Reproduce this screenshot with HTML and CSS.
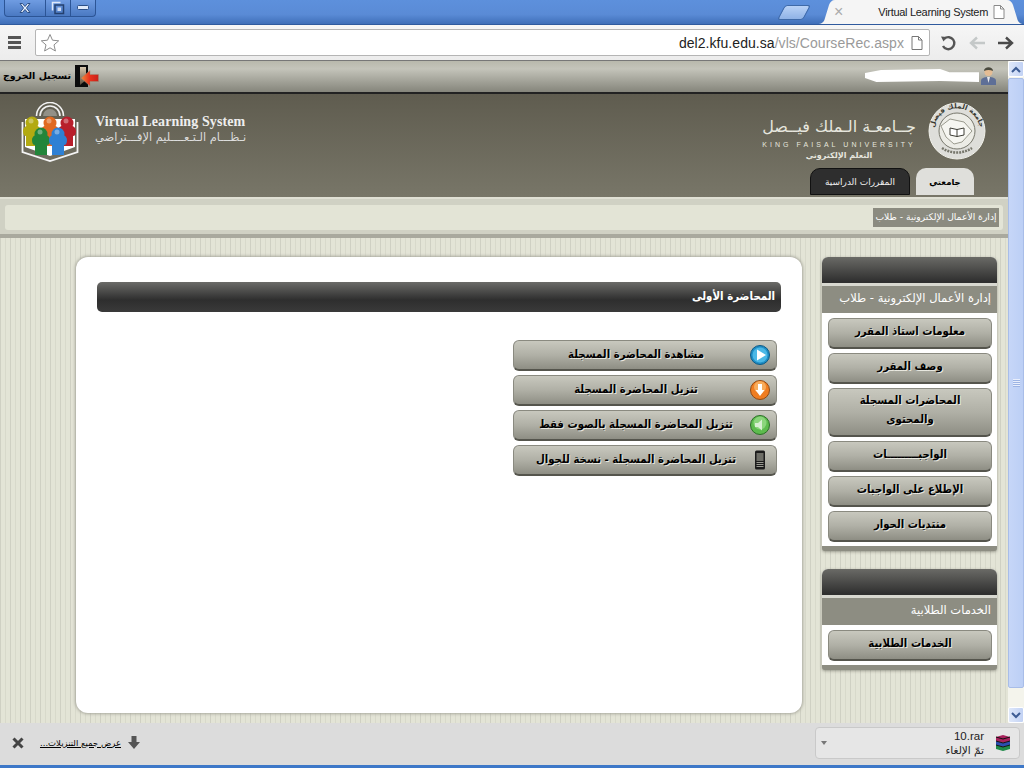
FILE: index.html
```html
<!DOCTYPE html>
<html lang="ar">
<head>
    <meta charset="UTF-8">
    <title>Virtual Learning System</title>
    <link rel="stylesheet" href="styles.css">
</head>
<body>
    <div class="titlebar">
        <div class="win-btns">
            <span class="win-btn win-close"><svg width="14" height="12" viewBox="0 0 14 12"><path d="M2 1.500h2.500L7 4.500l2.500-3H12L8.500 6l3.500 4.500H9.500L7 7.500l-2.500 3H2L5.500 6z" fill="#e6eefb" stroke="#2c4f86" stroke-width="1"/></svg></span>
            <span class="win-btn win-restore"><svg width="14" height="14" viewBox="0 0 14 14"><path d="M1.500 9.500v-8h8" fill="none" stroke="#dfe9fa" stroke-width="1.500"/><rect x="4" y="4" width="8.500" height="8.500" fill="none" stroke="#24406e" stroke-width="1.500"/><rect x="6.500" y="6.500" width="3.500" height="3.500" fill="#cfdcf3"/></svg></span>
            <span class="win-btn win-min"><svg width="12" height="6" viewBox="0 0 12 6"><rect x="0.500" y="0.500" width="11" height="4" rx="1" fill="#dfe9fa" stroke="#2c4f86"/></svg></span>
        </div>
        <div class="tabstrip">
            <span class="newtab"></span>
            <div class="tab">
                <span class="tab-x">×</span>
                <span class="tab-title">Virtual Learning System</span>
                <svg class="page-ico" width="12" height="14" viewBox="0 0 12 14"><path d="M1 .5h6.500L11 4v9.500H1zM7.500 .5V4H11" fill="#fff" stroke="#8a8a8a"/></svg>
            </div>
        </div>
    </div>

    <div class="toolbar">
        <span class="menu-ico"><i></i><i></i><i></i></span>
        <div class="omnibox">
            <svg width="20" height="20" viewBox="0 0 20 20"><path d="M10 1.500l2.500 5.700 6.200.6-4.700 4.100 1.400 6.100-5.400-3.200-5.400 3.200 1.400-6.100L1.300 7.800l6.200-.6z" fill="#fff" stroke="#8d8d8d"/></svg>
            <div class="url"><span class="host">del2.kfu.edu.sa</span>/vls/CourseRec.aspx</div>
            <svg width="12" height="14" viewBox="0 0 12 14"><path d="M1 .5h6.500L11 4v9.500H1zM7.500 .5V4H11" fill="#fff" stroke="#777"/></svg>
        </div>
        <div class="nav-btns">
            <svg width="16" height="16" viewBox="0 0 16 16"><path d="M4.500 3.500A6 6 0 1 1 3 11" fill="none" stroke="#555" stroke-width="2.400"/><path d="M1 1.500l6 .5-3.500 4.500z" fill="#555"/></svg>
            <svg width="18" height="14" viewBox="0 0 18 14"><path d="M17 7H4M9 1.500L3 7l6 5.500" fill="none" stroke="#c4c8c8" stroke-width="2.400"/></svg>
            <svg width="18" height="14" viewBox="0 0 18 14"><path d="M1 7h13M9 1.500L15 7l-6 5.500" fill="none" stroke="#4a4a4a" stroke-width="2.400"/></svg>
        </div>
    </div>

    <div class="viewport">
        <div class="page">
            <div class="userbar">
                <div class="logout">
                    <span>تسجيل الخروج</span>
                    <svg width="26" height="24" viewBox="0 0 26 24">
                        <defs>
                            <linearGradient id="exit-arrow" x1="0" x2="1"><stop offset="0" stop-color="#f08a3c"/><stop offset="0.5" stop-color="#e8321c"/><stop offset="1" stop-color="#c9201a"/></linearGradient>
                            <linearGradient id="exit-door" x1="0" x2="0" y1="0" y2="1"><stop offset="0" stop-color="#d6c7ad"/><stop offset="1" stop-color="#5a4c3c"/></linearGradient>
                        </defs>
                        <rect x="1" y="1" width="13" height="22" fill="#0c0c0c"/>
                        <path d="M6 3h6v13l-6 5z" fill="url(#exit-door)"/>
                        <path d="M7 14l9-7.500v4h8.500v7H16V22z" fill="url(#exit-arrow)" stroke="#9a8a76" stroke-width="0.500"/>
                    </svg>
                </div>
                <div class="user">
                    <span class="user-blot"></span>
                    <svg width="17" height="19" viewBox="0 0 17 19"><path d="M1 19v-4c0-3 3-4 7.500-4s7.500 1 7.500 4v4z" fill="#5e6f97"/><path d="M7 11h3l-1.500 6z" fill="#e8e8e8"/><circle cx="8.500" cy="6" r="4" fill="#e5bd94"/><path d="M4 5c0-5 9-5 9 0-3-1.500-6-1.500-9 0z" fill="#4a4a3e"/></svg>
                </div>
            </div>

            <div class="banner">
                <div class="brand">
                    <svg class="brand-logo" width="60" height="60" viewBox="0 0 60 60">
                        <defs>
                            <path id="person-body" d="M-1 12c0-4 4-6 9-6s9 2 9 6c0 3-1 5-3 5v10H2V17c-2 0-3-2-3-5z"/>
                        </defs>
                        <g fill="none" stroke="#f2f2f2" stroke-width="1.600"><path d="M19 14a10 10 0 0 1 20 0"/><path d="M15.500 14a13.500 13.500 0 0 1 27 0"/></g>
                        <path d="M22 14a7 7 0 0 1 14 0z" fill="#fff" opacity="0.300"/>
                        <path d="M4 17h50v28l-25 9-25-9z" fill="#fff"/>
                        <path d="M1.500 20v30l27.500 9 27.500-9V20" fill="none" stroke="#f4f4f4" stroke-width="1.800"/>
                        <g fill="#b3aa12"><use href="#person-body" x="3" y="17"/><circle cx="11" cy="21" r="6.500"/></g>
                        <g fill="#e06a22"><use href="#person-body" x="21" y="17"/><circle cx="29" cy="21" r="6.500"/></g>
                        <g fill="#b81f2c"><use href="#person-body" x="38" y="17"/><circle cx="46" cy="21" r="6.500"/></g>
                        <g fill="#23853a"><use href="#person-body" x="12" y="26"/><circle cx="20" cy="32" r="6.500"/></g>
                        <g fill="#2f80d4"><use href="#person-body" x="29" y="26"/><circle cx="37" cy="32" r="6.500"/></g>
                        <g fill="#fff" opacity="0.350"><circle cx="10" cy="19" r="2.500"/><circle cx="28" cy="19" r="2.500"/><circle cx="45" cy="19" r="2.500"/><circle cx="19" cy="30" r="2.500"/><circle cx="36" cy="30" r="2.500"/></g>
                    </svg>
                    <div class="brand-text">
                        <div class="brand-en">Virtual Learning System</div>
                        <div class="brand-ar">نـظـــام الـتـعــــليم الإفـــتراضي</div>
                    </div>
                </div>
                <div class="uni">
                    <div class="uni-row">
                        <div class="uni-text">
                            <div class="uni-ar">جــامعـة الـملك فيــصل</div>
                            <div class="uni-en">KING FAISAL UNIVERSITY</div>
                            <div class="uni-sub">التعلم الإلكتروني</div>
                        </div>
                        <svg class="seal" width="58" height="58" viewBox="0 0 58 58">
                            <defs><path id="seal-ring" d="M7 36A23 23 0 1 1 51 36"/></defs>
                            <circle cx="29" cy="29" r="28" fill="#dededa" stroke="#f1f1ea" stroke-width="1"/>
                            <text class="seal-text"><textPath href="#seal-ring" startOffset="50%" text-anchor="middle">جامعة الملك فيصل</textPath></text>
                            <circle cx="29" cy="29" r="18" fill="#ecece6" stroke="#77776c"/>
                            <path d="M13 24l9-7 14 3 8 9-10 11-8 2-8-7z" fill="#f6f6f1" stroke="#9a9a8e"/>
                            <path d="M22 26l7 1.500 7-1.500v7l-7 1.500-7-1.500zM29 27.500v7" fill="#fff" stroke="#3e3e36"/>
                            <path d="M14 46c9 6 21 6 30 0" fill="none" stroke="#77776c" stroke-width="2.500" stroke-dasharray="2 1"/>
                        </svg>
                    </div>
                    <div class="tabs">
                        <span class="tab-dark">المقررات الدراسية</span>
                        <span class="tab-light">جامعتي</span>
                    </div>
                </div>
            </div>

            <div class="crumb-band">
                <div class="crumb-bar"><span class="crumb-label">إدارة الأعمال الإلكترونية - طلاب</span></div>
            </div>

            <div class="content">
                <div class="sidebar">
                    <div class="box">
                        <div class="box-head"></div>
                        <div class="box-title">إدارة الأعمال الإلكترونية - طلاب</div>
                        <div class="box-body">
                            <a class="side-btn">معلومات استاذ المقرر</a>
                            <a class="side-btn">وصف المقرر</a>
                            <a class="side-btn side-btn-tall">المحاضرات المسجلة<br>والمحتوى</a>
                            <a class="side-btn">الواجبـــــــــات</a>
                            <a class="side-btn">الإطلاع على الواجبات</a>
                            <a class="side-btn">منتديات الحوار</a>
                        </div>
                    </div>
                    <div class="box">
                        <div class="box-head"></div>
                        <div class="box-title">الخدمات الطلابية</div>
                        <div class="box-body">
                            <a class="side-btn">الخدمات الطلابية</a>
                        </div>
                    </div>
                </div>

                <div class="main">
                    <div class="main-title">المحاضرة الأولى</div>
                    <div class="rec-list">
                        <a class="rec-btn">
                            <svg width="20" height="20" viewBox="0 0 20 20"><circle cx="10" cy="10" r="9.500" fill="#1f8fc6" stroke="#0d5a86"/><circle cx="10" cy="10" r="7.500" fill="#4bb8e6"/><path d="M7 4.500l9 5.500-9 5.500z" fill="#fff"/></svg>
                            <span>مشاهدة المحاضرة المسجلة</span>
                        </a>
                        <a class="rec-btn">
                            <svg width="20" height="20" viewBox="0 0 20 20"><circle cx="10" cy="10" r="9.500" fill="#ef7d22" stroke="#8f4a14"/><circle cx="10" cy="7" r="6" fill="#f7ac5c"/><path d="M8 4h4v6h2.500L10 16l-4.500-6H8z" fill="#fff"/></svg>
                            <span>تنزيل المحاضرة المسجلة</span>
                        </a>
                        <a class="rec-btn">
                            <svg width="20" height="20" viewBox="0 0 20 20"><circle cx="10" cy="10" r="9.500" fill="#5dbb4e" stroke="#2c6f28"/><circle cx="10" cy="8" r="6.500" fill="#8bd57c"/><path d="M5 8h3l4-3.500v11L8 12H5z" fill="#d8efd2"/></svg>
                            <span>تنزيل المحاضرة المسجلة بالصوت فقط</span>
                        </a>
                        <a class="rec-btn">
                            <svg width="20" height="20" viewBox="0 0 20 20"><rect x="5" y="0.500" width="10" height="19" rx="1.500" fill="#1b1b1b"/><rect x="6.500" y="3" width="7" height="8" fill="#6d6d66"/><path d="M6.500 12.500h7M6.500 14.500h7M6.500 16.500h7" stroke="#9a9a92"/></svg>
                            <span>تنزيل المحاضرة المسجلة - نسخة للجوال</span>
                        </a>
                    </div>
                </div>
            </div>
        </div>
        <div class="scrollbar">
            <span class="sb-btn"><svg width="10" height="7" viewBox="0 0 10 7"><path d="M1 6l4-4 4 4" fill="none" stroke="#3d5c94" stroke-width="2"/></svg></span>
            <div class="sb-thumb"><span class="sb-grip"></span></div>
            <span class="sb-btn"><svg width="10" height="7" viewBox="0 0 10 7"><path d="M1 1l4 4 4-4" fill="none" stroke="#3d5c94" stroke-width="2"/></svg></span>
        </div>
    </div>

    <div class="downloads">
        <svg class="dl-close" width="12" height="12" viewBox="0 0 12 12"><path d="M1.500 1.500l9 9M10.500 1.500l-9 9" stroke="#444" stroke-width="3"/></svg>
        <a class="dl-all">عرض جميع التنزيلات...</a>
        <svg width="12" height="13" viewBox="0 0 12 13"><path d="M3.500 0h5v6H12l-6 7-6-7h3.500z" fill="#555"/></svg>
        <div class="dl-item">
            <span class="dl-caret"></span>
            <div class="dl-text">
                <div class="dl-name">10.rar</div>
                <div class="dl-state">تمّ الإلغاء</div>
            </div>
            <svg width="16" height="18" viewBox="0 0 16 18"><path d="M1 3l7-2 7 2v4L8 9 1 7z" fill="#a8215c"/><path d="M1 7l7 2 7-2v4l-7 2-7-2z" fill="#2a4fb0"/><path d="M1 11l7 2 7-2v4l-7 2-7-2z" fill="#1f8a48"/><path d="M1 3l7 2 7-2M1 7l7 2 7-2M1 11l7 2 7-2" fill="none" stroke="#111"/></svg>
        </div>
    </div>
</body>
</html>
```

FILE: styles.css
```css
* { box-sizing: border-box; }
html, body {
    margin: 0;
    height: 768px;
    overflow: hidden;
}
body {
    width: 1024px;
    display: flex;
    flex-direction: column;
    font-family: "DejaVu Sans", sans-serif;
    background: #4a7fd0;
}

/* browser chrome */
.titlebar {
    height: 25px;
    flex: none;
    display: flex;
    justify-content: space-between;
    background: linear-gradient(#5d90dc, #5a8bd6 60%, #3f6fb8);
    border-bottom: 1px solid #2f5a9e;
}
.win-btns { display: flex; margin-left: 4px; height: 17px; }
.win-btn {
    display: flex;
    align-items: center;
    justify-content: center;
    height: 17px;
    background: linear-gradient(#6f9ce2, #4a79c2);
    border: 1px solid #2c5596;
    border-top: none;
    border-left: none;
}
.win-close { width: 42px; border-left: 1px solid #2c5596; border-radius: 0 0 0 4px; }
.win-restore { width: 25px; }
.win-min { width: 25px; border-radius: 0 0 4px 0; }
.tabstrip { display: flex; align-items: flex-end; }
.newtab {
    width: 26px;
    height: 15px;
    margin: 0 10px 4px 0;
    background: linear-gradient(#b9d2f6, #8fb2e6);
    border: 1px solid #3f6aa8;
    border-radius: 3px;
    transform: skewX(-28deg);
}
.tab {
    width: 207px;
    height: 24px;
    display: flex;
    align-items: center;
    padding: 0 19px 0 17px;
    background: #f5f5f5;
    clip-path: path('M0 24C5 24 7 22 8 18L12 5C13 2 15 0 18 0H190C193 0 195 2 196 5L200 18C201 22 203 24 207 24Z');
}
.tab-x { color: #aaa; font: 16px "Liberation Sans", sans-serif; margin-right: 35px; }
.tab-title { font: 11px "Liberation Sans", sans-serif; letter-spacing: -0.3px; color: #222; flex: 1; white-space: nowrap; }
.page-ico { flex: none; }

.toolbar {
    height: 36px;
    flex: none;
    display: flex;
    align-items: center;
    padding: 0 9px 0 8px;
    background: linear-gradient(#f6f6f6, #ececec);
    border-bottom: 1px solid #777;
}
.menu-ico { width: 13px; margin-right: 14px; display: flex; flex-direction: column; gap: 2px; }
.menu-ico i { height: 3px; background: #555; display: block; }
.omnibox {
    width: 895px;
    height: 27px;
    display: flex;
    align-items: center;
    padding: 0 6px 0 4px;
    background: #fff;
    border: 1px solid #b5b5b5;
    border-radius: 2px;
}
.url {
    flex: 1;
    text-align: right;
    font: 14px "Liberation Sans", sans-serif;
    letter-spacing: 0.05px;
    color: #9a9a9a;
    padding-right: 7px;
}
.host { color: #222; }
.nav-btns { flex: 1; display: flex; align-items: center; justify-content: space-between; padding-left: 10px; }

/* page */
.viewport { height: 662px; flex: none; display: flex; }
.page {
    width: 1008px;
    flex: none;
    display: flex;
    flex-direction: column;
    background: repeating-linear-gradient(90deg, #cfd0c3 0, #cfd0c3 1px, #e3e4d6 1px, #e3e4d6 5px, #d8d9cb 5px, #d8d9cb 6px, #e3e4d6 6px, #e3e4d6 10px);
}
.userbar {
    height: 33px;
    flex: none;
    display: flex;
    justify-content: space-between;
    align-items: center;
    padding: 0 11px 2px 3px;
    background: linear-gradient(#b8b8ac, #c4c4ba 25%, #9a9a90 75%, #85857b);
    border-bottom: 2px solid #222;
}
.logout { display: flex; align-items: center; gap: 3px; font-size: 9.500px; font-weight: bold; color: #000; }
.user { display: flex; align-items: center; gap: 1px; }
.user-blot {
    width: 114px;
    height: 13px;
    background: #fff;
    clip-path: polygon(0 30%, 14% 8%, 66% 0, 74% 25%, 100% 25%, 100% 100%, 66% 92%, 10% 100%, 0 70%);
}

.banner {
    height: 103px;
    flex: none;
    display: flex;
    justify-content: space-between;
    padding: 8px 22px 0 21px;
    background: linear-gradient(#5f5c4f, #787668);
}
.brand { display: flex; gap: 14px; }
.brand-logo { flex: none; }
.brand-text { padding-top: 12px; color: #eee; }
.brand-en { font: bold 14px "Liberation Serif", serif; letter-spacing: 0.1px; line-height: 16px; }
.brand-ar { font-size: 11.400px; line-height: 15px; direction: rtl; white-space: nowrap; color: #ddd; }
.uni { display: flex; flex-direction: column; align-items: flex-end; }
.uni-row { display: flex; gap: 11px; height: 60px; }
.uni-text { width: 156px; text-align: center; color: #e6e6de; padding-top: 13px; }
.uni-ar { font-size: 16px; line-height: 23px; direction: rtl; white-space: nowrap; }
.uni-en { font: 7px "Liberation Sans", sans-serif; letter-spacing: 3.050px; white-space: nowrap; line-height: 10px; margin-top: 2px; }
.uni-sub { font-size: 8px; font-weight: bold; line-height: 12px; direction: rtl; }
.seal-text { font-size: 7px; font-weight: bold; fill: #3a3a32; letter-spacing: 1.500px; }
.tabs { display: flex; gap: 6px; margin: 6px 12px 0 0; }
.tab-dark, .tab-light {
    height: 27px;
    display: flex;
    align-items: center;
    justify-content: center;
    border-radius: 10px 10px 0 0;
    font-size: 9px;
}
.tab-dark { width: 100px; background: #2e2e2e; color: #eee; border: 1px solid #111; }
.tab-light { width: 58px; background: #dfdfdb; color: #000; font-weight: bold; font-size: 8.500px; }

.crumb-band {
    height: 41px;
    flex: none;
    padding: 6px 5px 0;
    background: #d0d1c4;
    border-top: 2px solid #e0e0d4;
    border-bottom: 4px solid #a9a99e;
}
.crumb-bar {
    height: 25px;
    display: flex;
    justify-content: flex-end;
    align-items: center;
    padding-right: 4px;
    background: #e3e4d6;
    border-radius: 3px;
}
.crumb-label {
    width: 126px;
    height: 19px;
    background: #8b8b80;
    color: #fff;
    font-size: 9.200px;
    line-height: 18px;
    text-align: center;
    white-space: nowrap;
    direction: rtl;
}

.content {
    flex: 1;
    display: flex;
    direction: rtl;
    padding: 19px 11px 0 0;
    gap: 20px;
    align-items: flex-start;
}
.sidebar { width: 175px; flex: none; display: flex; flex-direction: column; gap: 18px; }
.box {
    background: #fff;
    border-radius: 6px 6px 3px 3px;
    border-bottom: 5px solid #8d8d82;
    box-shadow: 0 1px 3px rgba(80,80,70,0.5);
}
.box-head {
    height: 29px;
    background: linear-gradient(#6a6a66, #2f2f2f 85%, #2f2f2f 88%, #d8d8d0 88%);
    border-radius: 6px 6px 0 0;
}
.box-title {
    height: 27px;
    padding: 0 6px;
    background: #8d8d82;
    color: #fff;
    font-size: 11.500px;
    line-height: 25px;
    white-space: nowrap;
    overflow: hidden;
}
.box-body { display: flex; flex-direction: column; gap: 4px; padding: 5px 5px 4px 6px; }
.side-btn, .rec-btn {
    display: flex;
    border: 1px solid #8a8a80;
    border-bottom: 2px solid #55554d;
    border-radius: 6px;
    background: linear-gradient(#c8c8be, #b0b0a6 50%, #8e8e84);
    color: #000;
    font-family: "DejaVu Sans Condensed", "DejaVu Sans", sans-serif;
    font-size: 11.300px;
    font-weight: bold;
    text-shadow: 1px 1px 0 #e8e8e0;
    white-space: nowrap;
}
.side-btn {
    height: 31px;
    align-items: center;
    justify-content: center;
    text-align: center;
    line-height: 19px;
    padding-bottom: 4px;
}
.side-btn-tall { height: 49px; }

.main {
    width: 726px;
    height: 456px;
    flex: none;
    padding: 25px 21px 0;
    background: #fff;
    border-radius: 12px;
    box-shadow: 0 0 3px 1px #a9a99e;
}
.main-title {
    height: 30px;
    padding: 0 6px;
    background: linear-gradient(#6b6b68, #2e2e2e 60%, #3a3a3a);
    border-radius: 5px;
    color: #fff;
    font-family: "DejaVu Sans Condensed", "DejaVu Sans", sans-serif;
    font-size: 11.400px;
    font-weight: bold;
    line-height: 28px;
}
.rec-list { width: 264px; margin: 28px 4px 0 0; display: flex; flex-direction: column; gap: 4px; }
.rec-btn {
    height: 31px;
    align-items: center;
    padding: 0 6px 0 8px;
}
.rec-btn svg { flex: none; }
.rec-btn span { flex: 1; text-align: center; padding-bottom: 2px; }

.scrollbar {
    width: 16px;
    flex: none;
    display: flex;
    flex-direction: column;
    background: #f4f4ec;
    direction: ltr;
}
.sb-btn {
    height: 16px;
    flex: none;
    display: flex;
    align-items: center;
    justify-content: center;
    background: linear-gradient(90deg, #dfe8fa, #c2d2f4);
    border: 1px solid #fff;
    border-radius: 2px;
}
.sb-thumb {
    height: 610px;
    flex: none;
    margin: 1px 0 auto;
    display: flex;
    align-items: center;
    justify-content: center;
    background: linear-gradient(90deg, #c6d6f8, #bccff5);
    border: 1px solid #a8bde8;
    border-radius: 2px;
}
.sb-grip {
    width: 7px;
    height: 8px;
    background: repeating-linear-gradient(#e8eefc 0, #e8eefc 1px, #9db4e4 1px, #9db4e4 2px);
}

/* downloads shelf */
.downloads {
    flex: 1;
    display: flex;
    align-items: center;
    padding: 0 4px 3px 12px;
    background: #dcdcdc;
    border-bottom: 3px solid #3d78c8;
}
.dl-close { flex: none; margin-right: 17px; }
.dl-all {
    width: 80px;
    font-size: 8.500px;
    color: #000;
    text-decoration: underline;
    direction: rtl;
    white-space: nowrap;
    margin-right: 7px;
}
.dl-item {
    width: 205px;
    height: 32px;
    margin-left: auto;
    display: flex;
    align-items: center;
    padding: 0 8px 0 4px;
    background: #e6e6e6;
    border: 1px solid #c9c9c9;
    border-radius: 4px;
}
.dl-caret {
    width: 0;
    height: 0;
    margin: 0 8px 0 1px;
    border: 3px solid transparent;
    border-top: 4px solid #777;
    border-bottom: none;
}
.dl-text { flex: 1; text-align: right; padding-right: 11px; color: #222; }
.dl-name { font: 11.500px "Liberation Sans", sans-serif; line-height: 14px; }
.dl-state { font-size: 10.500px; line-height: 14px; direction: rtl; }
```
